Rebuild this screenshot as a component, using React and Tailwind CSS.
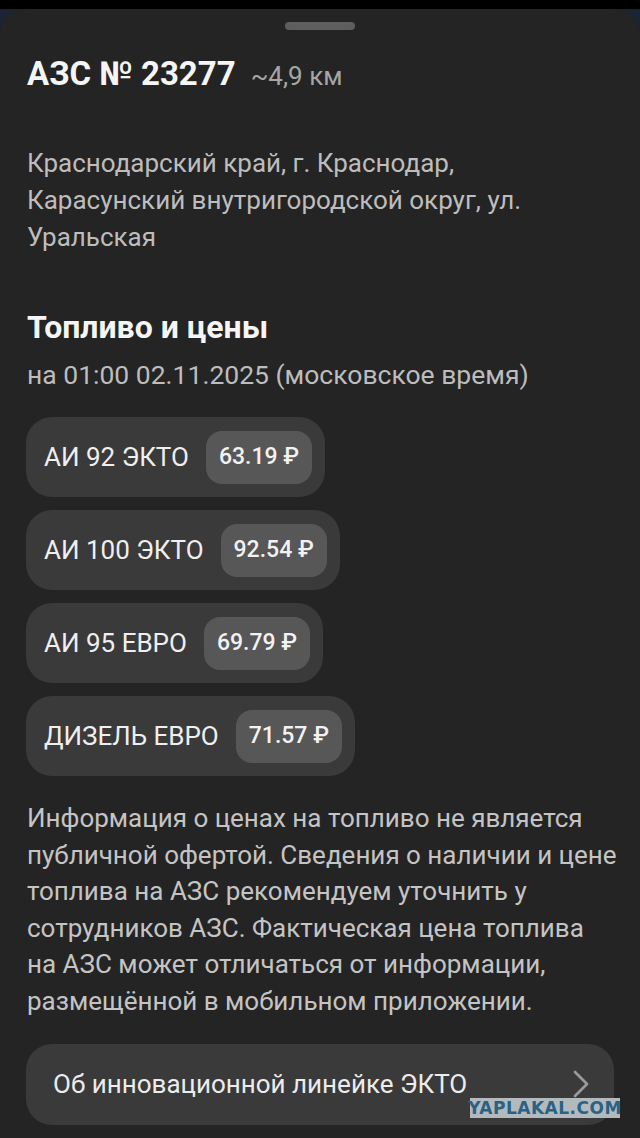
import React from "react";

const fuels = [
  { name: "АИ 92 ЭКТО", price: "63.19" },
  { name: "АИ 100 ЭКТО", price: "92.54" },
  { name: "АИ 95 ЕВРО", price: "69.79" },
  { name: "ДИЗЕЛЬ ЕВРО", price: "71.57" },
];

export default function App() {
  return (
    <div
      className="w-[640px] h-[1138px] overflow-hidden bg-[#1c2431] flex flex-col"
      style={{ fontFamily: "Roboto, 'Noto Sans', sans-serif" }}
    >
      <div className="h-[9px] bg-black shrink-0" />
      <div className="flex-1 bg-[#242424] rounded-t-[26px] flex flex-col relative">
        <div className="mt-[13px] mx-auto w-[70px] h-[8px] rounded-full bg-[#5e5e5e]" />

        <div className="mt-[28px] px-[27px] flex items-baseline gap-[15px] leading-[32px]">
          <span className="text-[33px] font-bold text-[#f5f5f5]">АЗС № 23277</span>
          <span className="text-[26px] text-[#a6a6a6]">~4,9 км</span>
        </div>

        <div className="mt-[53px] px-[27px] text-[26px] leading-[37px] text-[#bdbdbd] whitespace-nowrap">
          Краснодарский край, г. Краснодар,
          <br />
          Карасунский внутригородской округ, ул.
          <br />
          Уральская
        </div>

        <div className="mt-[53px] px-[27px] text-[32px] leading-[36px] font-bold text-[#f5f5f5]">
          Топливо и цены
        </div>
        <div className="mt-[14px] px-[27px] text-[26.5px] leading-[32px] text-[#bdbdbd] whitespace-nowrap">
          на 01:00 02.11.2025 (московское время)
        </div>

        <div className="mt-[26px] px-[26px] flex flex-col items-start gap-[13px]">
          {fuels.map((f) => (
            <div
              key={f.name}
              className="h-[80px] bg-[#3a3a3a] rounded-[26px] pl-[18px] pr-[13px] flex items-center gap-[17px]"
            >
              <span className="text-[26px] text-[#efefef] whitespace-nowrap">{f.name}</span>
              <span className="h-[53px] px-[13px] rounded-[16px] bg-[#575757] flex items-center text-[23px] font-medium text-[#f2f2f2] whitespace-nowrap">
                {f.price} ₽
              </span>
            </div>
          ))}
        </div>

        <div className="mt-[24px] px-[27px] text-[26px] leading-[36.6px] text-[#c4c4c4] whitespace-nowrap">
          Информация о ценах на топливо не является
          <br />
          публичной офертой. Сведения о наличии и цене
          <br />
          топлива на АЗС рекомендуем уточнить у
          <br />
          сотрудников АЗС. Фактическая цена топлива
          <br />
          на АЗС может отличаться от информации,
          <br />
          размещённой в мобильном приложении.
        </div>

        <div className="mt-[24px] mx-[26px] h-[81px] rounded-[26px] bg-[#3a3a3a] flex items-center justify-between pl-[27px] pr-[24px]">
          <span className="text-[26px] text-[#ececec] whitespace-nowrap">Об инновационной линейке ЭКТО</span>
          <svg width="18" height="28" viewBox="0 0 18 28" fill="none">
            <path d="M3 2 L15 14 L3 26" stroke="#9a9a9a" strokeWidth="2.8" strokeLinecap="round" strokeLinejoin="round" />
          </svg>
        </div>

        <div className="absolute left-[470px] top-[1089px] w-[150px] h-[20px] bg-[#b3babe] flex items-center justify-center">
          <span
            className="text-[17px] font-black text-[#2b6283] tracking-[0.5px] leading-none"
            style={{ fontFamily: "'DejaVu Sans', sans-serif" }}
          >
            YAPLAKAL.COM
          </span>
        </div>
      </div>
    </div>
  );
}
